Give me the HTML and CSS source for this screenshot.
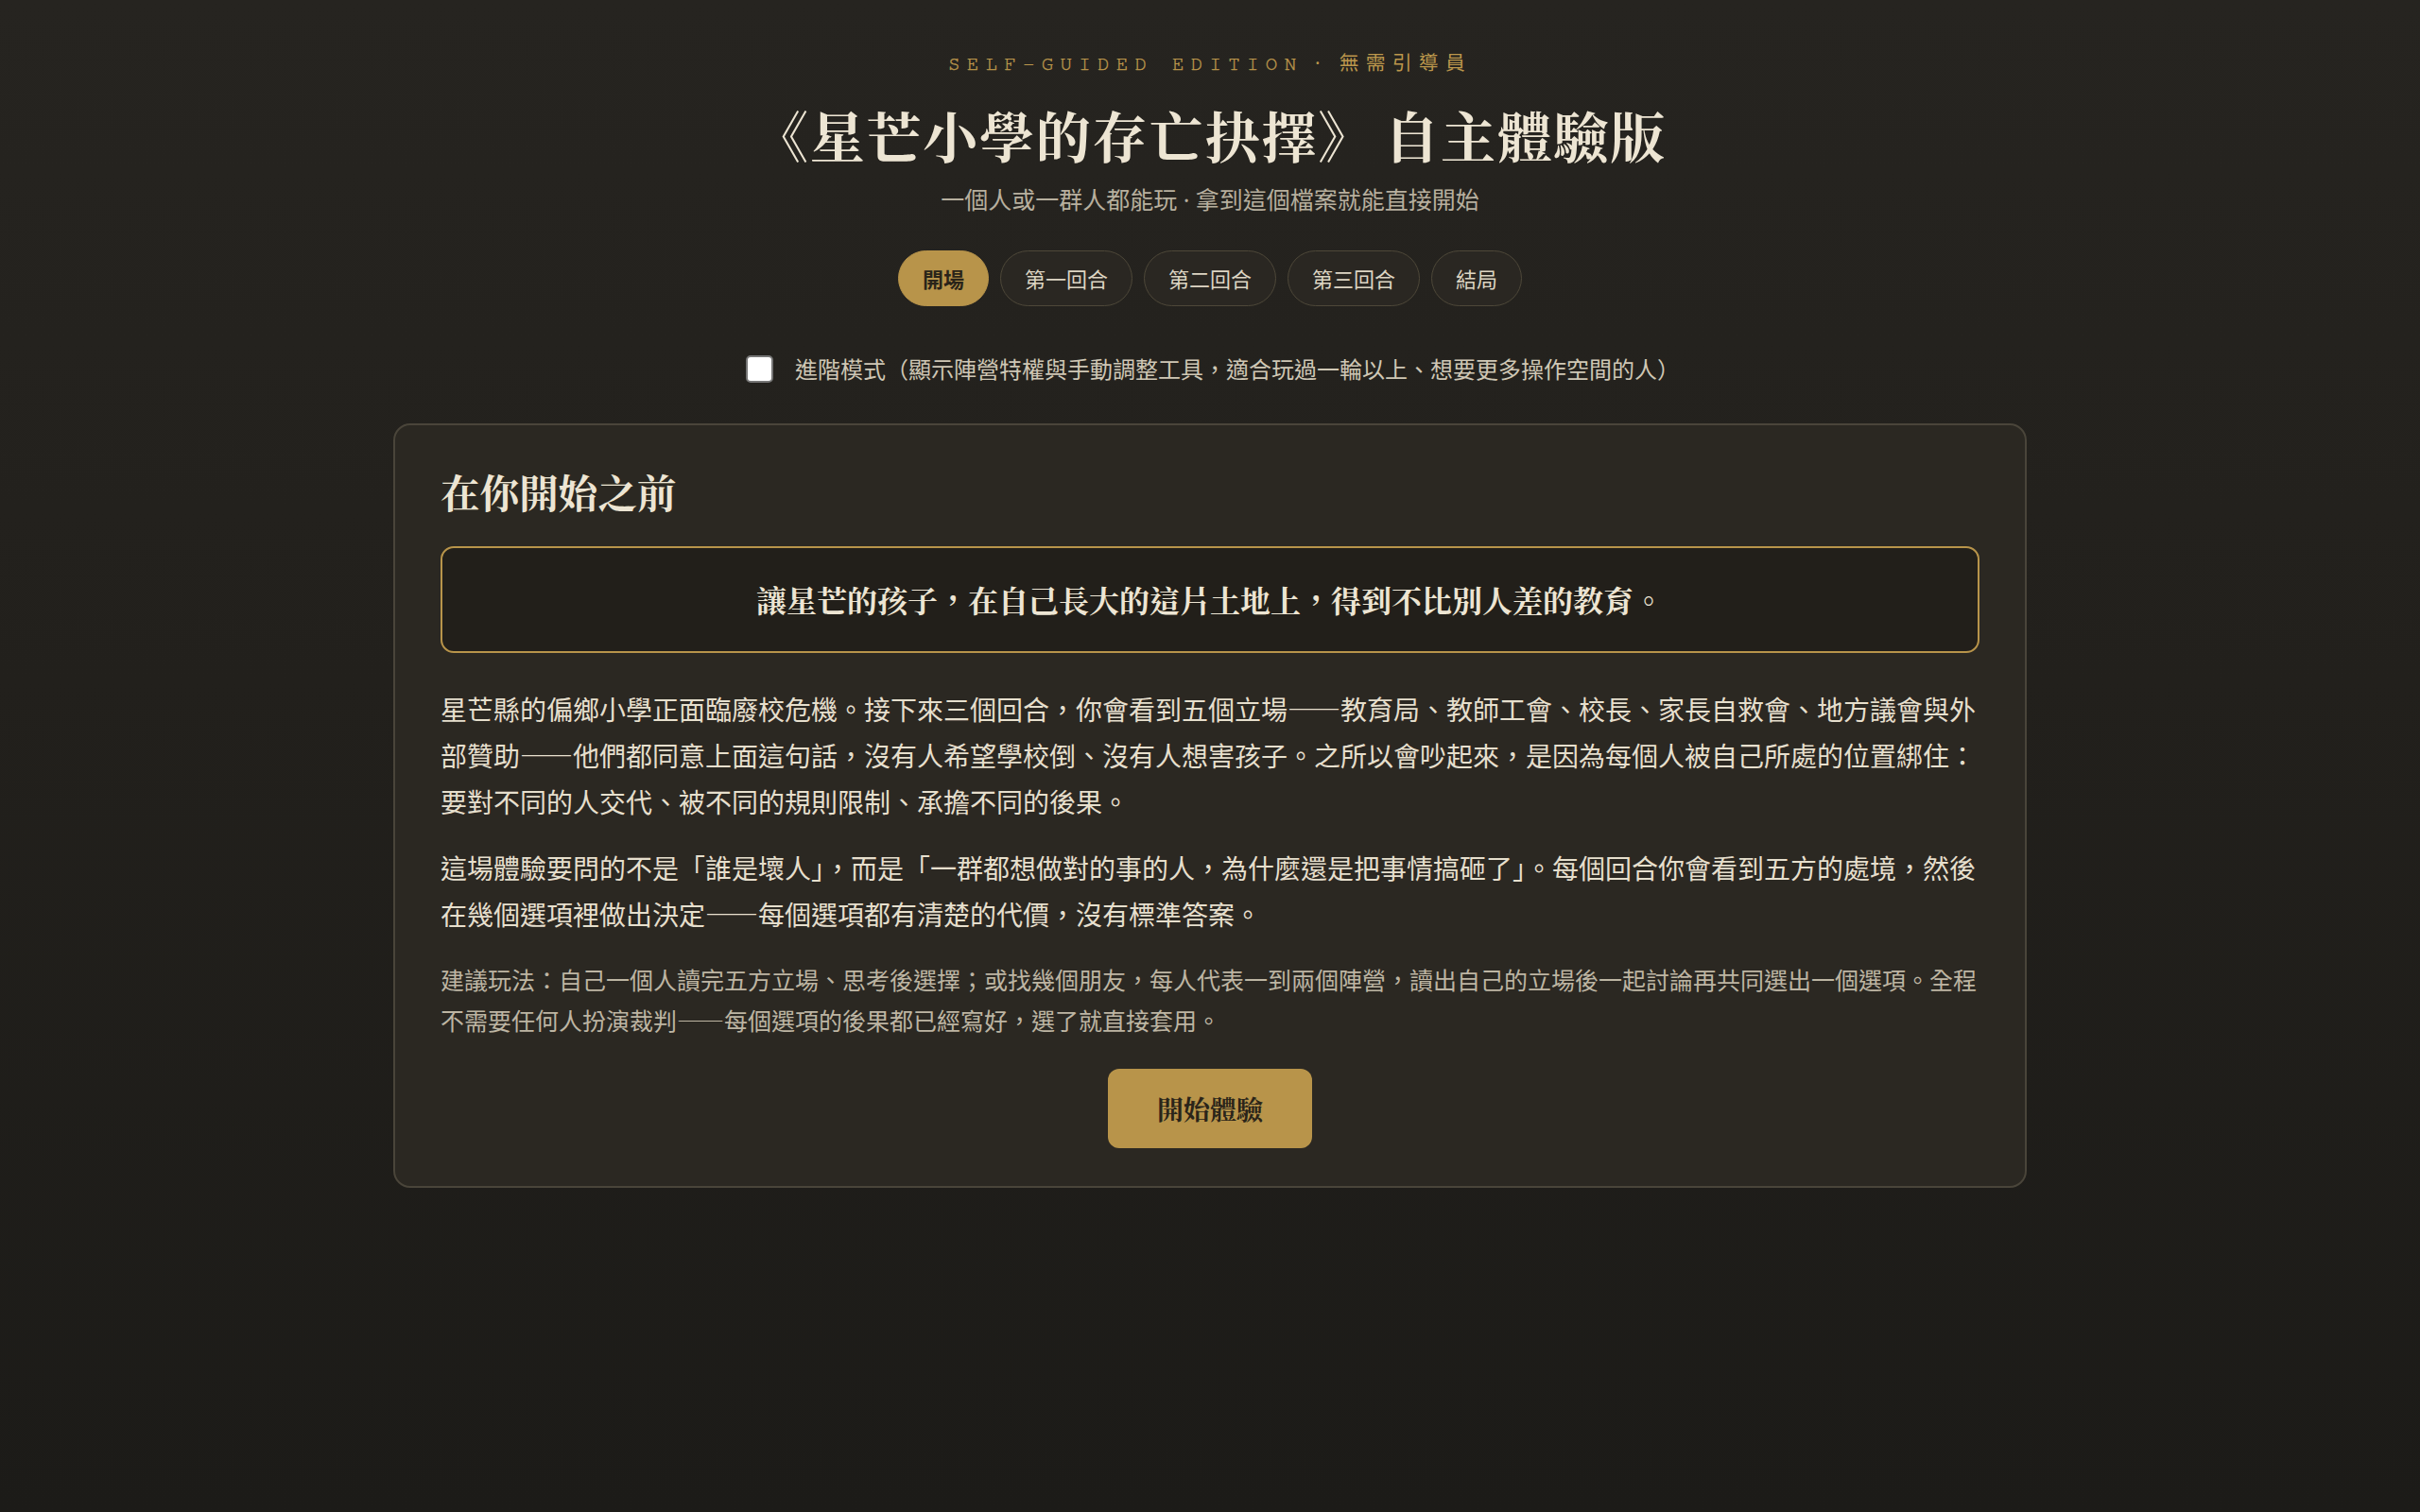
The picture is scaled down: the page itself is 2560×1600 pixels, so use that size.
FILE: index.html
```html
<!DOCTYPE html>
<html lang="zh-Hant">
<head>
<meta charset="utf-8">
<title>星芒小學的存亡抉擇 自主體驗版</title>
<link rel="stylesheet" href="styles.css">
</head>
<body>
<main class="page">
  <header class="hero">
    <p class="eyebrow"><span class="eyebrow-latin">SELF-GUIDED EDITION</span><span class="eyebrow-sep"> · </span>無需引導員</p>
    <h1 class="title">《星芒小學的存亡抉擇》 自主體驗版</h1>
    <p class="subtitle">一個人或一群人都能玩<span class="sep"> · </span>拿到這個檔案就能直接開始</p>
    <nav class="tabs">
      <button class="tab is-active">開場</button>
      <button class="tab">第一回合</button>
      <button class="tab">第二回合</button>
      <button class="tab">第三回合</button>
      <button class="tab">結局</button>
    </nav>
    <label class="advanced">
      <input type="checkbox" class="advanced-box">
      <span>進階模式（顯示陣營特權與手動調整工具，適合玩過一輪以上、想要更多操作空間的人）</span>
    </label>
  </header>

  <section class="card">
    <h2 class="card-title">在你開始之前</h2>
    <div class="mission">讓星芒的孩子，在自己長大的這片土地上，得到不比別人差的教育。</div>
    <p class="body-text">星芒縣的偏鄉小學正面臨廢校危機。接下來三個回合，你會看到五個立場——教育局、教師工會、校長、家長自救會、地方議會與外部贊助——他們都同意上面這句話，沒有人希望學校倒、沒有人想害孩子。之所以會吵起來，是因為每個人被自己所處的位置綁住：要對不同的人交代、被不同的規則限制、承擔不同的後果。</p>
    <p class="body-text">這場體驗要問的不是「誰是壞人」，而是「一群都想做對的事的人，為什麼還是把事情搞砸了」。每個回合你會看到五方的處境，然後在幾個選項裡做出決定——每個選項都有清楚的代價，沒有標準答案。</p>
    <p class="hint">建議玩法：自己一個人讀完五方立場、思考後選擇；或找幾個朋友，每人代表一到兩個陣營，讀出自己的立場後一起討論再共同選出一個選項。全程不需要任何人扮演裁判——每個選項的後果都已經寫好，選了就直接套用。</p>
    <div class="actions">
      <button class="start">開始體驗</button>
    </div>
  </section>
</main>
</body>
</html>
```

FILE: styles.css
```css
html, body {
  margin: 0;
  padding: 0;
}

body {
  min-height: 1600px;
  background: linear-gradient(180deg, #262420 0%, #22201c 45%, #1c1b18 100%);
  color: #e6dfcd;
  font-family: "Noto Sans CJK TC", "Noto Sans", sans-serif;
}

.page {
  padding: 51px 0 80px;
}

.hero {
  display: flex;
  flex-direction: column;
  align-items: center;
}

.eyebrow {
  margin: 0;
  font-family: "Nimbus Mono PS", "FreeMono", "Liberation Mono", "Noto Sans CJK TC", monospace;
  font-size: 20.8px;
  line-height: 31px;
  letter-spacing: 0.35em;
  color: #bc974c;
}

.eyebrow-latin {
  -webkit-text-stroke: 0.4px #bc974c;
}

.eyebrow-sep {
  font-family: "Noto Sans", sans-serif;
}

.title {
  margin: 22px 0 0;
  font-family: "Noto Serif CJK TC", "Noto Serif CJK SC", serif;
  font-weight: 700;
  font-size: 58px;
  line-height: 75px;
  letter-spacing: 0.03em;
  word-spacing: -6px;
  color: #ede5d3;
}

.subtitle {
  margin: 12px 0 0;
  font-size: 25px;
  line-height: 36px;
  color: #b7af9e;
}

.sep {
  font-family: "Noto Sans", sans-serif;
}

.tabs {
  display: flex;
  gap: 12px;
  margin-top: 36px;
}

.tab {
  font-family: "Noto Sans CJK TC", sans-serif;
  font-size: 22px;
  line-height: 33px;
  padding: 12px 25px;
  border: 1.5px solid #4e4839;
  border-radius: 999px;
  background: #2a2722;
  color: #ddd5c3;
  cursor: pointer;
}

.tab.is-active {
  background: #b8944a;
  border-color: #b8944a;
  color: #2a2419;
  font-weight: 700;
}

.advanced {
  display: flex;
  align-items: center;
  gap: 23px;
  margin-top: 48px;
  font-size: 24px;
  line-height: 36px;
  color: #cfc7b5;
}

.advanced-box {
  appearance: none;
  box-sizing: border-box;
  width: 29px;
  height: 29px;
  margin: 0 0 0 6px;
  background: #ffffff;
  border: 2.5px solid #767676;
  border-radius: 5px;
}

.card {
  box-sizing: border-box;
  width: 1728px;
  margin: 40px auto 0;
  padding: 42px 48px 40px;
  background: #2b2822;
  border: 2px solid #4a453a;
  border-radius: 18px;
}

.card-title {
  margin: 0 0 30px;
  font-family: "Noto Serif CJK TC", "Noto Serif CJK SC", serif;
  font-weight: 700;
  font-size: 41.6px;
  line-height: 56px;
  color: #ede5d3;
}

.mission {
  padding: 29px 24px;
  border: 2px solid #b8944a;
  border-radius: 14px;
  background: #221f1a;
  text-align: center;
  font-family: "Noto Serif CJK TC", "Noto Serif CJK SC", serif;
  font-weight: 700;
  font-size: 32px;
  line-height: 51px;
  color: #ede5d3;
}

.body-text {
  margin: 35px 0 0;
  font-size: 28px;
  line-height: 49px;
  color: #e6dfcd;
}

.body-text + .body-text {
  margin-top: 21px;
}

.hint {
  margin: 23px 0 0;
  font-size: 25px;
  line-height: 42.5px;
  color: #bdb5a3;
}

.actions {
  display: flex;
  justify-content: center;
  margin-top: 31px;
}

.start {
  font-family: "Noto Serif CJK TC", "Noto Serif CJK SC", serif;
  font-weight: 700;
  font-size: 28px;
  line-height: 42px;
  padding: 21px 52px;
  border: 0;
  border-radius: 12px;
  background: #b8944a;
  color: #2a2419;
  cursor: pointer;
}
```
